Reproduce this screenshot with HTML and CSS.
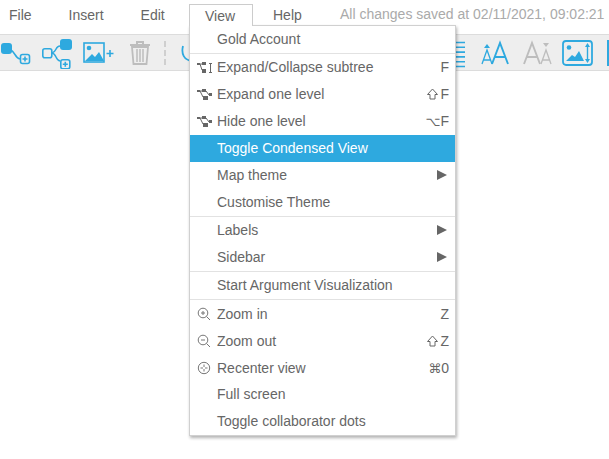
FILE: index.html
```html
<!DOCTYPE html>
<html lang="en">
<head>
<meta charset="utf-8">
<title>Map</title>
<link rel="stylesheet" href="styles.css">
</head>
<body>
<header class="menubar">
  <span class="top file">File</span>
  <span class="top insert">Insert</span>
  <span class="top edit">Edit</span>
  <span class="top view">View</span>
  <span class="top help">Help</span>
  <span class="saved">All changes saved at 02/11/2021, 09:02:21</span>
</header>
<div class="toolbar">
  <svg class="ic i1" width="32" height="30" viewBox="0 0 32 30"><rect x="1" y="5" width="11" height="11" rx="3" fill="#2ea9df"/><path d="M11 12c4 2 4 8 9 9" fill="none" stroke="#2ea9df" stroke-width="1.5"/><rect x="20.5" y="16.5" width="9" height="9" rx="2" fill="none" stroke="#2ea9df" stroke-width="1.6"/><path d="M25 18.5v5M22.500 21h5" stroke="#2ea9df" stroke-width="1.6"/></svg>
  <svg class="ic i2" width="32" height="32" viewBox="0 0 32 32"><rect x="1.800" y="11.800" width="9" height="9" rx="2" fill="none" stroke="#2ea9df" stroke-width="1.600"/><rect x="19" y="2" width="12" height="11" rx="3" fill="#2ea9df"/><path d="M11 16c5-1 3-7 8-7M11 16c5 1 3 7 8 8" fill="none" stroke="#2ea9df" stroke-width="1.500"/><rect x="19.800" y="22.800" width="9" height="9" rx="2" fill="none" stroke="#2ea9df" stroke-width="1.600"/><path d="M24.300 24.800v5M21.800 27.300h5" stroke="#2ea9df" stroke-width="1.600"/></svg>
  <svg class="ic i3" width="32" height="30" viewBox="0 0 32 30"><rect x="1" y="5" width="20" height="19" fill="none" stroke="#2ea9df" stroke-width="1.600"/><circle cx="6" cy="10" r="2.300" fill="#2ea9df"/><path d="M2 23l7-7 3 3 4-5 5 9z" fill="#2ea9df"/><path d="M27 12v7M23.500 15.500h7" stroke="#2ea9df" stroke-width="1.600"/></svg>
  <svg class="ic i4" width="22" height="30" viewBox="0 0 22 30"><path d="M1 7h20M8 6V4h6v2" fill="none" stroke="#bdbdbd" stroke-width="2"/><path d="M3 9l1.500 17h13L19 9z" fill="none" stroke="#bdbdbd" stroke-width="1.800"/><path d="M8 11v13M11 11v13M14 11v13" stroke="#bdbdbd" stroke-width="1.500"/></svg>
  <span class="dash"></span>
  <svg class="ic i5" width="12" height="30" viewBox="0 0 12 30"><path d="M2 8c-2 8 1 14 9 15" fill="none" stroke="#2ea9df" stroke-width="1.800"/></svg>
  <svg class="ic i6" width="14" height="30" viewBox="0 0 14 30"><path d="M1 4.500h13M1 9.300h13M1 14.100h13M1 18.900h13M1 23.700h13M1 28.500h13" stroke="#2ea9df" stroke-width="1.600"/></svg>
  <svg class="ic i7" width="30" height="30" viewBox="0 0 30 30"><path d="M7 6l3 4H4z" fill="#2ea9df"/><path d="M2 26l5-14 5 14M3.500 22h7" fill="none" stroke="#2ea9df" stroke-width="1.300"/><path d="M12 26L20 5l8 21M15 19h10" fill="none" stroke="#2ea9df" stroke-width="1.900"/></svg>
  <svg class="ic i8" width="30" height="30" viewBox="0 0 30 30"><path d="M20 5h6l-3 4z" fill="#bdbdbd"/><path d="M1 26L9 5l8 21M4 19h10" fill="none" stroke="#bdbdbd" stroke-width="1.900"/><path d="M18 26l5-14 5 14M19.500 22h7" fill="none" stroke="#bdbdbd" stroke-width="1.300"/></svg>
  <svg class="ic i9" width="31" height="30" viewBox="0 0 31 30"><rect x="1" y="3" width="29" height="24" rx="3" fill="none" stroke="#2ea9df" stroke-width="1.800"/><circle cx="7" cy="9.500" r="2.300" fill="#2ea9df"/><path d="M4 23l6-6 3 2 4-6 5 10z" fill="#2ea9df"/><path d="M25.500 7v16" stroke="#2ea9df" stroke-width="1.400"/><path d="M25.500 5l2.500 4h-5zM25.500 25l2.500-4h-5z" fill="#2ea9df"/></svg>
  <span class="stub"></span>
</div>
<div class="menu">
  <div class="row"><span class="label">Gold Account</span></div>
  <div class="sep"></div>
  <div class="row"><svg class="mi" width="18" height="12" viewBox="0 0 18 12"><rect x="0" y="1" width="3" height="2" fill="#666"/><rect x="5" y="0" width="4" height="3" fill="#666"/><rect x="5" y="7" width="4" height="4" fill="#666"/><path d="M3 2l2 6M3 2h3" stroke="#666" stroke-width="1"/><path d="M13.500 1v10" stroke="#666"/><path d="M12 1.500h3M12 10.500h3" stroke="#666"/></svg><span class="label">Expand/Collapse subtree</span><span class="key">F</span></div>
  <div class="row"><svg class="mi" width="18" height="12" viewBox="0 0 18 12"><rect x="0" y="1" width="3" height="2" fill="#666"/><rect x="5" y="0" width="4" height="3" fill="#666"/><rect x="6" y="7" width="5" height="4" fill="#666"/><path d="M3 2l3 6M3 2h3M9 2l3 4" stroke="#666" stroke-width="1"/><rect x="12" y="4" width="3" height="3" fill="#666"/></svg><span class="label">Expand one level</span><span class="key"><svg class="shift" width="11" height="12" viewBox="0 0 11 12"><path d="M5.500 1L10.500 6.500H8V11H3V6.500H.5z" fill="none" stroke="#666"/></svg>F</span></div>
  <div class="row"><svg class="mi" width="18" height="12" viewBox="0 0 18 12"><rect x="0" y="1" width="3" height="2" fill="#666"/><rect x="5" y="0" width="4" height="3" fill="#666"/><rect x="6" y="7" width="5" height="4" fill="#666"/><path d="M3 2l3 6M3 2h3M9 2l3 4" stroke="#666" stroke-width="1"/><rect x="12" y="4" width="3" height="3" fill="#666"/></svg><span class="label">Hide one level</span><span class="key"><span class="sym">⌥</span>F</span></div>
  <div class="row active"><span class="label">Toggle Condensed View</span></div>
  <div class="row"><span class="label">Map theme</span><span class="arrow"></span></div>
  <div class="row"><span class="label">Customise Theme</span></div>
  <div class="sep"></div>
  <div class="row"><span class="label">Labels</span><span class="arrow"></span></div>
  <div class="row"><span class="label">Sidebar</span><span class="arrow"></span></div>
  <div class="sep"></div>
  <div class="row"><span class="label">Start Argument Visualization</span></div>
  <div class="sep"></div>
  <div class="row low"><svg class="mi" width="14" height="14" viewBox="0 0 14 14"><circle cx="6" cy="6" r="4.800" fill="none" stroke="#777"/><path d="M9.500 9.500L13 13M4 6h4M6 4v4" stroke="#777"/></svg><span class="label">Zoom in</span><span class="key">Z</span></div>
  <div class="row low"><svg class="mi" width="14" height="14" viewBox="0 0 14 14"><circle cx="6" cy="6" r="4.800" fill="none" stroke="#777"/><path d="M9.500 9.500L13 13M4 6h4" stroke="#777"/></svg><span class="label">Zoom out</span><span class="key"><svg class="shift" width="11" height="12" viewBox="0 0 11 12"><path d="M5.500 1L10.500 6.500H8V11H3V6.500H.5z" fill="none" stroke="#666"/></svg>Z</span></div>
  <div class="row low"><svg class="mi" width="14" height="14" viewBox="0 0 14 14"><circle cx="7" cy="7" r="5.700" fill="none" stroke="#777"/><path d="M7 3.500v2.500M7 8v2.500M3.500 7H6M8 7h2.500" stroke="#777"/></svg><span class="label">Recenter view</span><span class="key"><span class="sym">⌘</span>0</span></div>
  <div class="row"><span class="label">Full screen</span></div>
  <div class="row"><span class="label">Toggle collaborator dots</span></div>
</div>
</body>
</html>
```
FILE: styles.css
```css
html, body {
  margin: 0;
  padding: 0;
  background: #fff;
  overflow: hidden;
}
body {
  width: 609px;
  height: 459px;
  position: relative;
  font-family: "Liberation Sans", Arial, sans-serif;
  font-size: 14px;
  color: #666;
}
.menubar {
  height: 34px;
  display: flex;
  align-items: flex-start;
  white-space: nowrap;
  line-height: 16px;
}
.top {
  color: #666;
  margin-top: 7px;
}
.file { margin-left: 9px; }
.insert { margin-left: 37px; }
.edit { margin-left: 37px; }
.toolbar {
  box-sizing: border-box;
  height: 37px;
  background: #eeeeee;
  border-top: 1px solid #dcdcdc;
  border-bottom: 1px solid #dcdcdc;
  display: flex;
  align-items: center;
  overflow: hidden;
}
.ic { flex: none; }
.i2 { margin-left: 9px; }
.i3 { margin-left: 10px; }
.i4 { margin-left: 14px; }
.dash {
  flex: none;
  height: 24px;
  margin-left: 13px;
  border-left: 2px dashed #cfcfcf;
}
.i5 { margin-left: 15px; }
.i6 { margin-left: 258px; }
.i7 { margin-left: 15px; }
.i8 { margin-left: 13px; }
.i9 { margin-left: 9px; }
.stub {
  flex: none;
  width: 4px;
  height: 26px;
  margin-left: 14px;
  background: #2ea9df;
}
.view {
  position: absolute;
  left: 189px;
  top: 4px;
  box-sizing: border-box;
  width: 64px;
  height: 22px;
  margin: 0;
  padding: 3px 0 0 15px;
  background: #fff;
  border: 1px solid #ccc;
  border-bottom: 0;
  z-index: 3;
}
.help {
  position: absolute;
  left: 273px;
  top: 7px;
  margin: 0;
}
.saved {
  position: absolute;
  left: 340px;
  top: 6px;
  color: #aaa;
}
.menu {
  position: absolute;
  left: 189px;
  top: 25px;
  box-sizing: border-box;
  width: 267px;
  height: 411px;
  background: #fff;
  border: 1px solid #d0d0d0;
  box-shadow: 1px 2px 3px rgba(0, 0, 0, 0.3);
  z-index: 2;
}
.row {
  box-sizing: border-box;
  height: 27px;
  display: flex;
  align-items: center;
  position: relative;
  padding: 0 6px 1px 27px;
  white-space: nowrap;
}
.low { padding-bottom: 0; padding-top: 1px; }
.sep {
  height: 1px;
  background: #e2e2e2;
}
.label { flex: 1; }
.key {
  display: flex;
  align-items: center;
  color: #666;
}
.shift { margin-right: 2px; }
.sym {
  font-family: "DejaVu Sans", sans-serif;
  font-size: 13px;
}
.arrow {
  width: 0;
  height: 0;
  margin-right: 2px;
  border-left: 10px solid #666;
  border-top: 5px solid transparent;
  border-bottom: 5px solid transparent;
}
.active {
  background: #2ea9df;
  color: #fff;
}
.mi {
  position: absolute;
  left: 7px;
  top: 50%;
  transform: translateY(-50%);
}
```
